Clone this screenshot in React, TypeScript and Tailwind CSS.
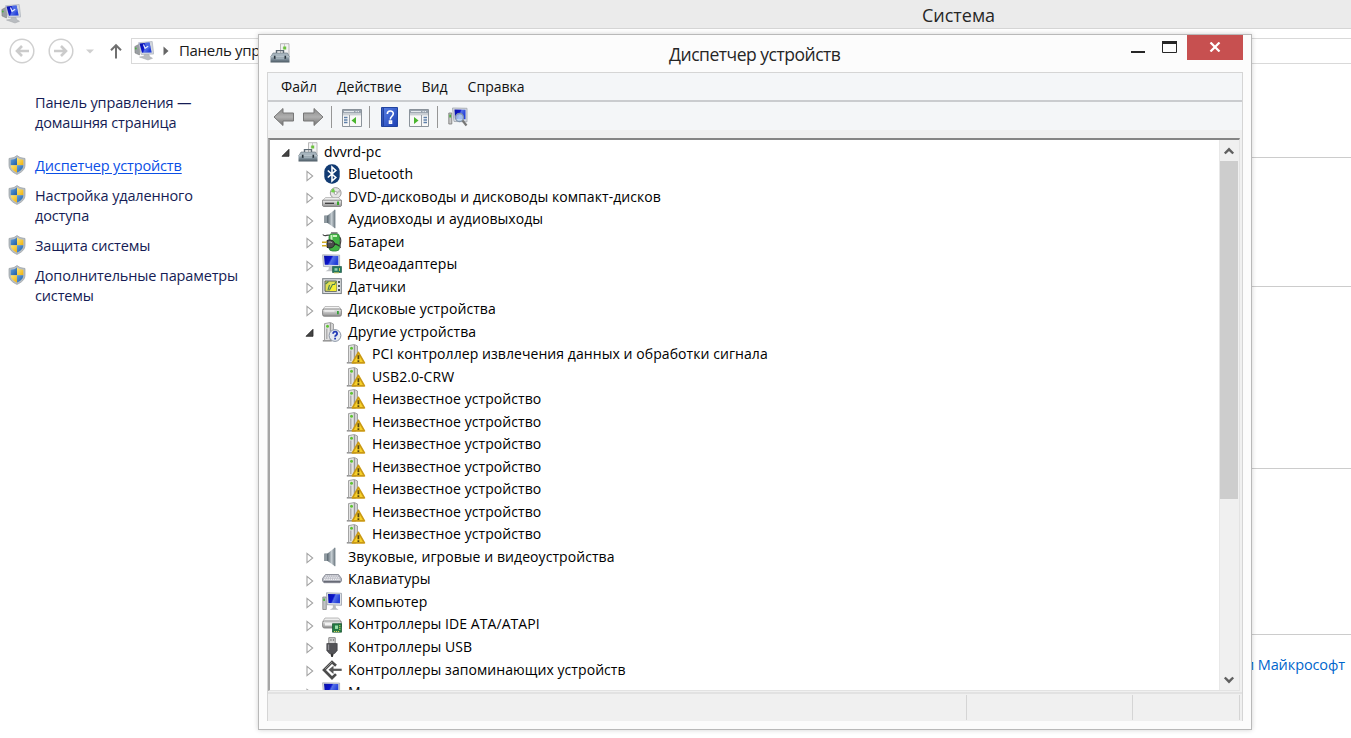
import type { ReactNode } from "react";

type IconName =
  | "root" | "bluetooth" | "dvd" | "speaker" | "battery" | "display" | "sensor" | "disk"
  | "other" | "warning" | "keyboard" | "computer" | "ide" | "usb" | "storage";

type Row = { level: 0 | 1 | 2; icon: IconName; text: string; open?: boolean };

const unknown: Row = { level: 2, icon: "warning", text: "Неизвестное устройство" };

const rows: Row[] = [
  { level: 0, icon: "root", text: "dvvrd-pc", open: true },
  { level: 1, icon: "bluetooth", text: "Bluetooth" },
  { level: 1, icon: "dvd", text: "DVD-дисководы и дисководы компакт-дисков" },
  { level: 1, icon: "speaker", text: "Аудиовходы и аудиовыходы" },
  { level: 1, icon: "battery", text: "Батареи" },
  { level: 1, icon: "display", text: "Видеоадаптеры" },
  { level: 1, icon: "sensor", text: "Датчики" },
  { level: 1, icon: "disk", text: "Дисковые устройства" },
  { level: 1, icon: "other", text: "Другие устройства", open: true },
  { level: 2, icon: "warning", text: "PCI контроллер извлечения данных и обработки сигнала" },
  { level: 2, icon: "warning", text: "USB2.0-CRW" },
  unknown, unknown, unknown, unknown, unknown, unknown, unknown,
  { level: 1, icon: "speaker", text: "Звуковые, игровые и видеоустройства" },
  { level: 1, icon: "keyboard", text: "Клавиатуры" },
  { level: 1, icon: "computer", text: "Компьютер" },
  { level: 1, icon: "ide", text: "Контроллеры IDE ATA/ATAPI" },
  { level: 1, icon: "usb", text: "Контроллеры USB" },
  { level: 1, icon: "storage", text: "Контроллеры запоминающих устройств" },
  { level: 1, icon: "display", text: "М" },
];

function Gradients() {
  return (
    <svg className="absolute h-0 w-0" aria-hidden="true">
      <defs>
        <linearGradient id="metal" x1="0" y1="0" x2="0" y2="1">
          <stop offset="0" stopColor="#f0f0f0" />
          <stop offset="1" stopColor="#8f8f8f" />
        </linearGradient>
        <linearGradient id="steel" x1="0" y1="0" x2="0" y2="1">
          <stop offset="0" stopColor="#a9b7c0" />
          <stop offset="0.5" stopColor="#7b8b96" />
          <stop offset="1" stopColor="#4b5963" />
        </linearGradient>
        <linearGradient id="screen" x1="0" y1="0" x2="1" y2="0.35">
          <stop offset="0" stopColor="#0a12a4" />
          <stop offset="0.5" stopColor="#0b14cc" />
          <stop offset="0.62" stopColor="#5571e6" />
          <stop offset="1" stopColor="#2440da" />
        </linearGradient>
        <linearGradient id="cone" x1="0" y1="0" x2="1" y2="0">
          <stop offset="0" stopColor="#5e6b74" />
          <stop offset="0.55" stopColor="#c6ced3" />
          <stop offset="1" stopColor="#707b83" />
        </linearGradient>
        <linearGradient id="arrow" x1="0" y1="0" x2="0" y2="1">
          <stop offset="0" stopColor="#8a8a8a" />
          <stop offset="0.5" stopColor="#b0b0b0" />
          <stop offset="1" stopColor="#707070" />
        </linearGradient>
        <linearGradient id="help" x1="0" y1="0" x2="1" y2="1">
          <stop offset="0" stopColor="#5b83e6" />
          <stop offset="1" stopColor="#1c3fb4" />
        </linearGradient>
        <linearGradient id="gold" x1="0" y1="0" x2="1" y2="1">
          <stop offset="0" stopColor="#ffe777" />
          <stop offset="1" stopColor="#eeb211" />
        </linearGradient>
        <linearGradient id="blue" x1="0" y1="0" x2="1" y2="1">
          <stop offset="0" stopColor="#66a3dc" />
          <stop offset="1" stopColor="#1d5ba6" />
        </linearGradient>
      </defs>
    </svg>
  );
}

function Svg({ children, className = "size-5" }: { children: ReactNode; className?: string }) {
  return (
    <svg viewBox="0 0 20 20" className={`${className} shrink-0`} fill="none">
      {children}
    </svg>
  );
}

function Tower() {
  return (
    <>
      <path d="M.8 18.800h9" stroke="#8f8f8f" strokeWidth="1.500" />
      <path d="M2.500 1.600 8.500.5 11.500 2v15.300L8 18.500H2.500z" fill="#d2d2d2" stroke="#929292" strokeWidth=".8" />
      <path d="M3 2.200 8 1.200v16.600H3z" fill="#e3e3e3" />
      <path d="M8.300 1v17.300" stroke="#858585" strokeWidth=".9" />
      <path d="M4.800 6.500v10.500" stroke="#a6a6a6" strokeWidth="1.300" />
      <circle cx="5.500" cy="4.200" r="1.500" fill="#5fc234" />
    </>
  );
}

function DeviceIcon({ name }: { name: IconName }) {
  switch (name) {
    case "root":
      return (
        <Svg>
          <path d="M10.500.7h8.500v12h-8.500z" fill="#f3f3f3" stroke="#a8a8a8" strokeWidth=".8" />
          <path d="M14.500 1v4h-1.800" stroke="#b8b8b8" strokeWidth=".8" />
          <path d="M13.200 3.500h3v3h-3z" fill="#6cc23d" />
          <path d="M6.500 10V7.600h7V10" stroke="#5c6973" strokeWidth="1.400" />
          <path d="M3 10h14.500l2 4H.7z" fill="#a7b5be" stroke="#65747e" strokeWidth=".6" />
          <path d="M.5 13.200h19v6.300H.5z" fill="url(#steel)" />
          <path d="M1 13.700h18" stroke="#c4d0d6" strokeWidth=".7" />
          <path d="M4.700 12.800v3M15.300 12.800v3" stroke="#26323a" strokeWidth="1.600" />
          <path d="M6 15.700h8" stroke="#a6b5bd" />
        </Svg>
      );
    case "bluetooth":
      return (
        <Svg>
          <rect x="2.300" y=".3" width="15.400" height="19.400" rx="7.300" fill="#123b73" />
          <path d="m5.800 6.500 8 7L10 17V3l3.800 3.500-8 7" stroke="#fff" strokeWidth="1.600" />
        </Svg>
      );
    case "dvd":
      return (
        <Svg>
          <circle cx="13.700" cy="6" r="5.400" fill="#e5e5e5" stroke="#929292" strokeWidth=".9" />
          <path d="m13.700 6-4.700-1 .8-2.200 1.900-1.500z" fill="#6fd047" />
          <path d="m13.700 6 4-3.300 1 2.500z" fill="#bcbcbc" />
          <circle cx="13.700" cy="6" r="1.500" fill="#fff" stroke="#8a8a8a" strokeWidth=".7" />
          <path d="M3.500 10.500h13l2.800 3H.7z" fill="#ededed" stroke="#aaa" strokeWidth=".7" />
          <path d="M.5 13.200h19v5.500l-1 .8h-17l-1-.8z" fill="url(#metal)" stroke="#777" strokeWidth=".8" />
          <path d="M3 16.300h9" stroke="#333" strokeWidth="1.200" />
          <path d="M15 14.500h2v3.500h-2z" fill="#3aa52d" />
        </Svg>
      );
    case "speaker":
      return (
        <Svg>
          <path d="M2.300 6.500h4v7.500h-4z" fill="#68747d" />
          <path d="M5.500 6.500 13 .5v18.800L5.500 14z" fill="url(#cone)" />
          <path d="M13 .8v18.400" stroke="#7e8a92" strokeWidth=".9" />
          <path d="M4 6.500V14" stroke="#b6c0c6" />
        </Svg>
      );
    case "battery":
      return (
        <Svg>
          <path d="M.8 2.500c2 3 4.500-.5 7 1M17.500 5c3.500 3-1 8 1 11" stroke="#444" strokeWidth="1.200" />
          <rect x="7" y="1.500" width="10.500" height="17.500" rx="3.500" fill="#42b344" stroke="#287f35" strokeWidth=".8" />
          <path d="M9.500 3v5M11 4h4" stroke="#c8f4bd" strokeWidth="1.900" />
          <path d="M9 .9h6.500" stroke="#777" strokeWidth="1.500" />
          <path d="M5 8.500C9 7 12.500 9 12.500 12S9 17 5 15.300z" fill="#4d4d4d" stroke="#242424" />
          <path d="M0 10.300h5M0 13.700h5" stroke="#cfaa24" strokeWidth="1.600" />
          <path d="M12.500 12c3 0 3 1.500 5 2" stroke="#303030" strokeWidth="1.300" />
          <path d="M6.500 10.200c2-.5 3 0 3.600.8" stroke="#b5b5b5" />
        </Svg>
      );
    case "display":
      return (
        <Svg>
          <path d="m.6.800 17 .3v12L1.500 12.500z" fill="#dcdfe5" stroke="#a5aab2" strokeWidth=".8" />
          <path d="m2 1.800 14.300.3v9L2.800 10.700z" fill="url(#screen)" />
          <path d="m7 12.500-.5 3-3 1.700h7v-4.500" fill="#bfc2c6" />
          <path d="M10.500 12.500h9v6h-9z" fill="#24775b" stroke="#155340" strokeWidth=".6" />
          <path d="M12.500 14.200h3v2.500h-3z" fill="#92d2b5" />
          <path d="M17.500 14v3M12 18.900h5" stroke="#d9d35f" strokeWidth=".9" />
        </Svg>
      );
    case "sensor":
      return (
        <Svg>
          <rect x=".7" y="1.700" width="18.600" height="14.800" fill="#e0e2e4" stroke="#7e8489" strokeWidth="1.100" />
          <path d="M3 4h11.500v10.300H3z" fill="#dfe052" stroke="#59605c" />
          <path d="m8 9 2-1 3.500-3.500h1V14H8z" fill="#f4ee35" />
          <path d="m3.500 7 3-2.500M6 13l1.500-5M7.500 13l3-5.500h2l1.500-3" stroke="#4a7d55" strokeWidth="1.100" />
          <path d="M17 4v2M17 8v2M17 12v2" stroke="#3f484b" strokeWidth="1.800" />
        </Svg>
      );
    case "disk":
      return (
        <Svg>
          <path d="M3 7.500h14l2.500 3.500H.5z" fill="#f3f3f3" stroke="#b0b0b0" strokeWidth=".8" />
          <rect x=".6" y="10" width="18.800" height="7.200" rx="1.600" fill="url(#metal)" stroke="#7b7b7b" strokeWidth=".9" />
          <path d="M15 12h1.800v3.300H15z" fill="#38a23a" />
          <path d="M2.500 12h10" stroke="#fafafa" />
        </Svg>
      );
    case "other":
      return (
        <Svg>
          <Tower />
          <circle cx="13" cy="13.500" r="5.900" fill="#e6eaf0" stroke="#8c96a6" />
          <path d="M11.100 11.800c0-2.900 4-2.700 4 0 0 1.500-2 1.500-2 3" stroke="#223ab5" strokeWidth="1.800" />
          <path d="M12.200 15.800h1.800v1.700h-1.800z" fill="#223ab5" />
        </Svg>
      );
    case "warning":
      return (
        <Svg>
          <Tower />
          <path d="m12.400 8.300 6 10.500H6.400z" fill="#f6d02a" stroke="#cb9a14" strokeWidth="1.700" strokeLinejoin="round" />
          <path d="M12.400 11.300v4M12.400 16.300v1.600" stroke="#574510" strokeWidth="1.800" />
        </Svg>
      );
    case "keyboard":
      return (
        <Svg>
          <path d="M3.500 5.500h13l3 4V12L18 13.700H2L.5 12V9.500z" fill="#b3b5be" stroke="#80838e" strokeWidth=".8" />
          <path d="M3.500 7h13M2.500 8.700h15M2 10.400h16" stroke="#f0f0f3" strokeWidth="1.100" strokeDasharray="1.500 .7" />
          <path d="M1.500 12.700h17" stroke="#676a75" strokeWidth="1.400" />
        </Svg>
      );
    case "computer":
      return (
        <Svg>
          <path d="M.8 5h3.500v12.500H.8z" fill="#c1c4c6" stroke="#777" strokeWidth=".7" />
          <path d="M1.300 6.500h1.600v2.500H1.300z" fill="#46b43c" />
          <path d="m4.500.8 15 .5v12l-14.500-.6z" fill="#dfe3e8" stroke="#999fa9" strokeWidth=".8" />
          <path d="m6 2 12 .3v9L6.500 11z" fill="url(#screen)" />
          <path d="m11 13-.3 3-3 1.700h9l-2.700-1.700-.4-3z" fill="#b9bcc0" />
        </Svg>
      );
    case "ide":
      return (
        <Svg>
          <path d="M3 4h13.500l2.800 3.500H.7z" fill="#eee" stroke="#a8a8a8" strokeWidth=".8" />
          <rect x=".6" y="7" width="18.800" height="7" rx="1.800" fill="url(#metal)" stroke="#858585" strokeWidth=".9" />
          <path d="M3 9h13v2.500H3z" fill="#f2f2f2" />
          <path d="M10.500 9.700h9v8.500h-9z" fill="#257b45" stroke="#145029" strokeWidth=".7" />
          <path d="M13 11.500h3v3.400h-3z" fill="#9be0aa" />
          <path d="M17.800 11v5M12 17.500h6" stroke="#dfd961" strokeDasharray="1.200 .8" />
        </Svg>
      );
    case "usb":
      return (
        <Svg>
          <path d="M6.800.7h6.400v6.500H6.800z" fill="#d7d7d7" stroke="#888" />
          <path d="M8.300 3h1.300M10.800 3H12" stroke="#777" strokeWidth="1.500" />
          <path d="M4.800 6.500h10.400v7L12.700 16.500H7.300L4.800 13.500z" fill="#535357" stroke="#343437" strokeWidth=".6" />
          <path d="M6.500 7.500V13" stroke="#909095" strokeWidth="1.300" />
          <path d="M8.300 16.500h3.500l-1 3.400H9.300z" fill="#333" />
        </Svg>
      );
    case "storage":
      return (
        <Svg>
          <path d="M14 5.700 10 2 2 10l8 8 4-3.900" stroke="#4c4c4c" strokeWidth="2.700" />
          <path d="M19.700 9.800H9.500" stroke="#555" strokeWidth="2.200" />
          <path d="m11.500 5.800-5 4 5 4.200" fill="#555" />
          <path d="m3 9 7-7" stroke="#a0a0a0" strokeWidth=".8" />
        </Svg>
      );
  }
}

function PcIcon() {
  return (
    <Svg>
      <path d="M.8 5.500 5.500 3v11L1 12z" fill="#9a9fa3" stroke="#777" strokeWidth=".5" />
      <circle cx="1.800" cy="7.500" r=".9" fill="#49b23e" />
      <path d="m4.500 1.700 13.700-1.200L19.700 13l-12.500.5z" fill="#d3d7de" stroke="#aeb3bc" strokeWidth=".7" />
      <path d="m5.500 2.500 10-.9 2.200 10-9.700.2z" fill="url(#screen)" />
      <path d="m10.500 1.900 5-.4 1 5-3.500 2z" fill="#4a68e4" />
      <path d="m9.500 3.500 1.500 3.800 3.200-2" stroke="#e3eaff" strokeWidth="1.200" />
      <path d="m10.500 13.500-.5 1.700-4.500.8 8.500 3 4.500-1.700-3-1.800-.5-2z" fill="#b9bcc0" stroke="#a0a4a8" strokeWidth=".5" />
    </Svg>
  );
}

function Shield() {
  return (
    <svg viewBox="0 0 18 20" className="mt-px h-5 w-[18px] shrink-0">
      <path d="M9 .5 12 2.500l5 1v6.500c0 4.800-3.500 7.300-8 9.400C4.500 17.300 1 14.800 1 10V3.500l5-1z" fill="#b9bfc3" stroke="#979ea3" strokeWidth=".7" />
      <path d="M9 2.500v7.700H2.700V4.800c2.600-.1 4.400-.8 6.300-2.300z" fill="url(#blue)" />
      <path d="M9 2.500v7.700h6.300V4.800C12.700 4.700 10.900 4 9 2.500z" fill="url(#gold)" />
      <path d="M2.700 10.200H9v7.300c-3.500-1.700-6.200-3.700-6.300-7.300z" fill="url(#gold)" />
      <path d="M15.300 10.200H9v7.300c3.500-1.700 6.200-3.700 6.300-7.300z" fill="url(#blue)" />
    </svg>
  );
}

function Expander({ open }: { open?: boolean }) {
  return (
    <svg viewBox="0 0 10 12" className="mt-[3px] h-3 w-2.5 shrink-0">
      {open ? (
        <path d="M8 2.300v7H1z" fill="#444" stroke="#262626" strokeWidth=".8" />
      ) : (
        <path d="m2 1.300 5.700 4.700L2 10.700z" fill="#fff" stroke="#a3a3a3" strokeWidth="1.100" />
      )}
    </svg>
  );
}

const indent = ["pl-[11px]", "pl-[35px]", "pl-[76px]"];

function TreeRow({ row }: { row: Row }) {
  return (
    <div className={`flex h-[22.52px] shrink-0 items-center ${indent[row.level]}`}>
      {row.level < 2 && (
        <span className="mr-[7px] flex">
          <Expander open={row.open} />
        </span>
      )}
      <DeviceIcon name={row.icon} />
      <span className="ml-1.5 whitespace-nowrap">{row.text}</span>
    </div>
  );
}

function NavCircle({ back }: { back?: boolean }) {
  return (
    <svg viewBox="0 0 26 26" className="size-[26px]" fill="none">
      <circle cx="13" cy="13" r="11.800" stroke="#d0d0d0" strokeWidth="1.500" />
      <path d={back ? "M20 13H8m5-5-5 5 5 5" : "M6 13h12m-5-5 5 5-5 5"} stroke="#cbcbcb" strokeWidth="2.600" />
    </svg>
  );
}

function PaneIcon({ left }: { left?: boolean }) {
  return (
    <svg viewBox="0 0 20 18" className="h-[18px] w-5" fill="none">
      <path d="M.5.500h19v17H.5z" fill="#f8f8f8" stroke="#8b939b" />
      <path d="M1 1h18v3.500H1z" fill="#98a2ad" />
      <path d="M2 2.600h10M13.500 2.600h1.300M15.700 2.600H17" stroke="#eef1f4" />
      <path d="M1 5.800h18" stroke="#b7bec5" />
      {left ? (
        <>
          <path d="M7.500 6v11" stroke="#969da5" />
          <path d="M2 8.500h3.500M2 11h3.500M2 13.500h3.500" stroke="#5d7fa9" strokeWidth="1.300" />
          <path d="M14 8v7l-4.500-3.500z" fill="#49b52e" />
        </>
      ) : (
        <>
          <path d="M12.500 6v11" stroke="#969da5" />
          <path d="M14.500 8.500H18M14.500 11H18M14.500 13.500H18" stroke="#5d7fa9" strokeWidth="1.300" />
          <path d="M5 8v7l4.500-3.500z" fill="#49b52e" />
        </>
      )}
    </svg>
  );
}

function ToolArrow({ back }: { back?: boolean }) {
  return (
    <svg viewBox="0 0 22 20" className="h-5 w-[22px]">
      <path
        d={back ? "M1 10 10 1.500V6h10.500v8H10v4.500z" : "M21 10 12 1.500V6H1.500v8H12v4.500z"}
        fill="url(#arrow)"
        stroke="#777"
        strokeLinejoin="round"
      />
    </svg>
  );
}

function Divider() {
  return <span className="h-[22px] w-px bg-[#969696]" />;
}

function Toolbar() {
  return (
    <div className="flex h-[28px] shrink-0 items-center bg-[#f4f6f8] pt-[2px] pl-[5px]">
      <ToolArrow back />
      <span className="ml-[7px]"><ToolArrow /></span>
      <span className="ml-[7px] flex"><Divider /></span>
      <span className="mt-[2px] ml-[10px]"><PaneIcon left /></span>
      <span className="ml-[7px] flex"><Divider /></span>
      <svg viewBox="0 0 17 20" className="ml-[11px] h-5 w-[17px]" fill="none">
        <path d="M.5.500h16v19H.5z" fill="url(#help)" stroke="#20439f" />
        <path d="M2.200 1v18" stroke="#1d3c98" strokeWidth="1.300" />
        <path d="M6.300 7c0-4 6-4 6-.5 0 3-3 2.500-3 6M8.500 14h2v2.200h-2z" stroke="#fff" strokeWidth="1.600" />
      </svg>
      <span className="mt-[2px] ml-[11px]"><PaneIcon /></span>
      <span className="ml-[8px] flex"><Divider /></span>
      <svg viewBox="0 0 20 20" className="mb-px ml-[10px] size-5" fill="none">
        <path d="M.8 6h3v11h-3z" fill="#c8c8c8" stroke="#777" strokeWidth=".8" />
        <path d="M1.300 7.500h1.800v3H1.300z" fill="#4cad3e" />
        <path d="m4.500 1 14.500.3v13.500l-13-.3z" fill="#d9dde3" stroke="#a5aab2" strokeWidth=".9" />
        <path d="m6.500 2.500 11 .3v9.500l-10.500-.2z" fill="url(#screen)" />
        <circle cx="11.500" cy="10.500" r="4" fill="#bdd7f4" fillOpacity=".8" stroke="#8092a8" strokeWidth="1.300" />
        <path d="m14.500 13.500 4 5" stroke="#777" strokeWidth="2.200" />
      </svg>
    </div>
  );
}

function ScrollBar() {
  return (
    <div className="flex w-[20px] shrink-0 flex-col border-l border-[#e8e8e8] bg-[#f0f0f0] pr-px">
      <div className="flex h-[21px] items-center justify-center">
        <svg viewBox="0 0 12 8" className="h-2 w-3"><path d="m1.800 6.500 4.200-4.200 4.200 4.200" fill="none" stroke="#606060" strokeWidth="2.400" /></svg>
      </div>
      <div className="h-[338px] bg-[#cdcdcd]" />
      <div className="flex flex-1 items-end justify-center pb-[6px]">
        <svg viewBox="0 0 12 8" className="h-2 w-3"><path d="m1.800 1.500 4.200 4.200 4.200-4.200" fill="none" stroke="#606060" strokeWidth="2.400" /></svg>
      </div>
    </div>
  );
}

function DeviceManager() {
  return (
    <section className="absolute top-[34px] left-[258px] flex h-[696px] w-[994px] flex-col border border-[#b9b9b9] bg-[#fcfcfc] px-2 pb-2 shadow-[0_0_5px_rgba(0,0,0,0.18)]">
      <header className="flex h-[37px] shrink-0">
        <div className="w-[56px] pt-[8px] pl-[3px]"><DeviceIcon name="root" /></div>
        <h1 className="flex-1 pt-[6px] pl-[346px] text-[17.5px] leading-[26px] tracking-[-0.48px] text-[#262626]">Диспетчер устройств</h1>
        <div className="flex">
          <svg viewBox="0 0 60 26" className="h-[26px] w-[60px]" fill="none">
            <path d="M4 17h14" stroke="#262626" strokeWidth="2" />
            <path d="M35.500 7v10.500h14V7" stroke="#262626" />
            <path d="M35 7.500h15" stroke="#262626" strokeWidth="3" />
          </svg>
          <div className="flex h-[25px] w-14 items-center justify-center bg-[#c75050]">
            <svg viewBox="0 0 12 10" className="mr-px mb-[2px] h-2.5 w-3"><path d="m1.500.5 9 9m0-9-9 9" stroke="#fff" strokeWidth="2.200" /></svg>
          </div>
        </div>
      </header>
      <div className="flex min-h-0 flex-1 flex-col border-t border-r border-l border-[#d5d5d5] bg-[#f0f0f0]">
        <nav className="flex h-[29px] shrink-0 items-center gap-[20px] border-b-2 border-[#cacccf] bg-[#f4f6f8] pl-[13px] text-[14px] tracking-[0.02px] text-[#111]">
          <span>Файл</span>
          <span>Действие</span>
          <span>Вид</span>
          <span>Справка</span>
        </nav>
        <Toolbar />
        <div className="mt-2 mr-[2px] flex h-[553px] shrink-0 border-t-2 border-r border-b border-l-2 border-t-[#858585] border-r-[#e3e3e3] border-b-[#e3e3e3] border-l-[#a5a5a5] bg-white">
          <div className="flex min-w-0 flex-1 flex-col overflow-hidden pt-[0.4px] text-[14px] leading-[20px] tracking-[0.07px] text-black">
            {rows.map((row, i) => <TreeRow key={i} row={row} />)}
          </div>
          <ScrollBar />
        </div>
        <footer className="mt-[1px] flex flex-1 border-t-2 border-[#e2e2e2] pt-px pr-[2px] pb-px">
          <div className="flex-1 border-r border-[#d5d5d5]" />
          <div className="w-[166px] border-r border-[#d5d5d5]" />
          <div className="w-[107px] border-r border-[#d5d5d5]" />
        </footer>
      </div>
    </section>
  );
}

const links = [["Настройка удаленного", "доступа"], ["Защита системы"], ["Дополнительные параметры", "системы"]];

export default function App() {
  return (
    <main className="relative flex h-[738px] w-[1351px] flex-col overflow-hidden bg-white font-['Open_Sans','Noto_Sans',sans-serif]">
      <Gradients />
      <header className="flex h-[29px] shrink-0 border-b border-[#d5d5d5] bg-[#ebebeb] pt-1 pl-px">
        <PcIcon />
        <h2 className="ml-[901px] text-[18px] leading-[23px] tracking-[-0.02px] text-[#262626]">Система</h2>
      </header>
      <div className="flex h-[44px] shrink-0 items-center pl-[8.5px]">
        <NavCircle back />
        <span className="ml-[13px]"><NavCircle /></span>
        <svg viewBox="0 0 8 5" className="ml-[12px] h-[5px] w-2"><path d="M0 .5h8L4 4.500z" fill="#cfcfcf" /></svg>
        <svg viewBox="0 0 14 16" className="ml-[15.5px] h-4 w-3.5" fill="none"><path d="M7 15.500V2M2 7.200l5-5 5 5" stroke="#707070" strokeWidth="2" /></svg>
        <div className="ml-[8px] flex h-[26px] flex-1 items-center border-y border-l border-[#d9d9d9] pl-[2px]">
          <PcIcon />
          <svg viewBox="0 0 6 10" className="ml-[9px] h-2.5 w-1.5"><path d="M.5.500 5.500 5l-5 4.500z" fill="#666" /></svg>
          <span className="mb-[2px] ml-[10px] text-[15px] tracking-[-0.35px] text-[#1a1a1a]">Панель управления</span>
        </div>
      </div>
      <div className="flex min-h-0 flex-1">
        <aside className="w-[258px] shrink-0 pt-5 pl-2 text-[14.5px] leading-[20px] tracking-[-0.15px] whitespace-nowrap text-[#151c55]">
          <p className="pl-[27px]">Панель управления —<br />домашняя страница</p>
          <div className="mt-[23px] flex gap-[9px] text-[#0b4fe6]">
            <span className="-mt-[2px]"><Shield /></span>
            <a className="underline underline-offset-2">Диспетчер устройств</a>
          </div>
          {links.map((lines) => (
            <div key={lines[0]} className="mt-2.5 flex gap-[9px]">
              <span className="-mt-[2px]"><Shield /></span>
              <a className="flex flex-col">
                {lines.map((line) => <span key={line}>{line}</span>)}
              </a>
            </div>
          ))}
        </aside>
        <div className="flex flex-1 flex-col">
          <div className="h-[85px] border-b border-[#ccc]" />
          <div className="h-[129px] border-b border-[#ccc]" />
          <div className="h-[182px] border-b border-[#ccc]" />
          <div className="h-[166px] border-b border-[#ccc]" />
          <p className="pt-[20px] pr-[6px] text-right text-[14.5px] leading-[20px] tracking-[-0.1px] text-[#0066cc]">корпорации Майкрософт</p>
        </div>
      </div>
      <DeviceManager />
    </main>
  );
}
